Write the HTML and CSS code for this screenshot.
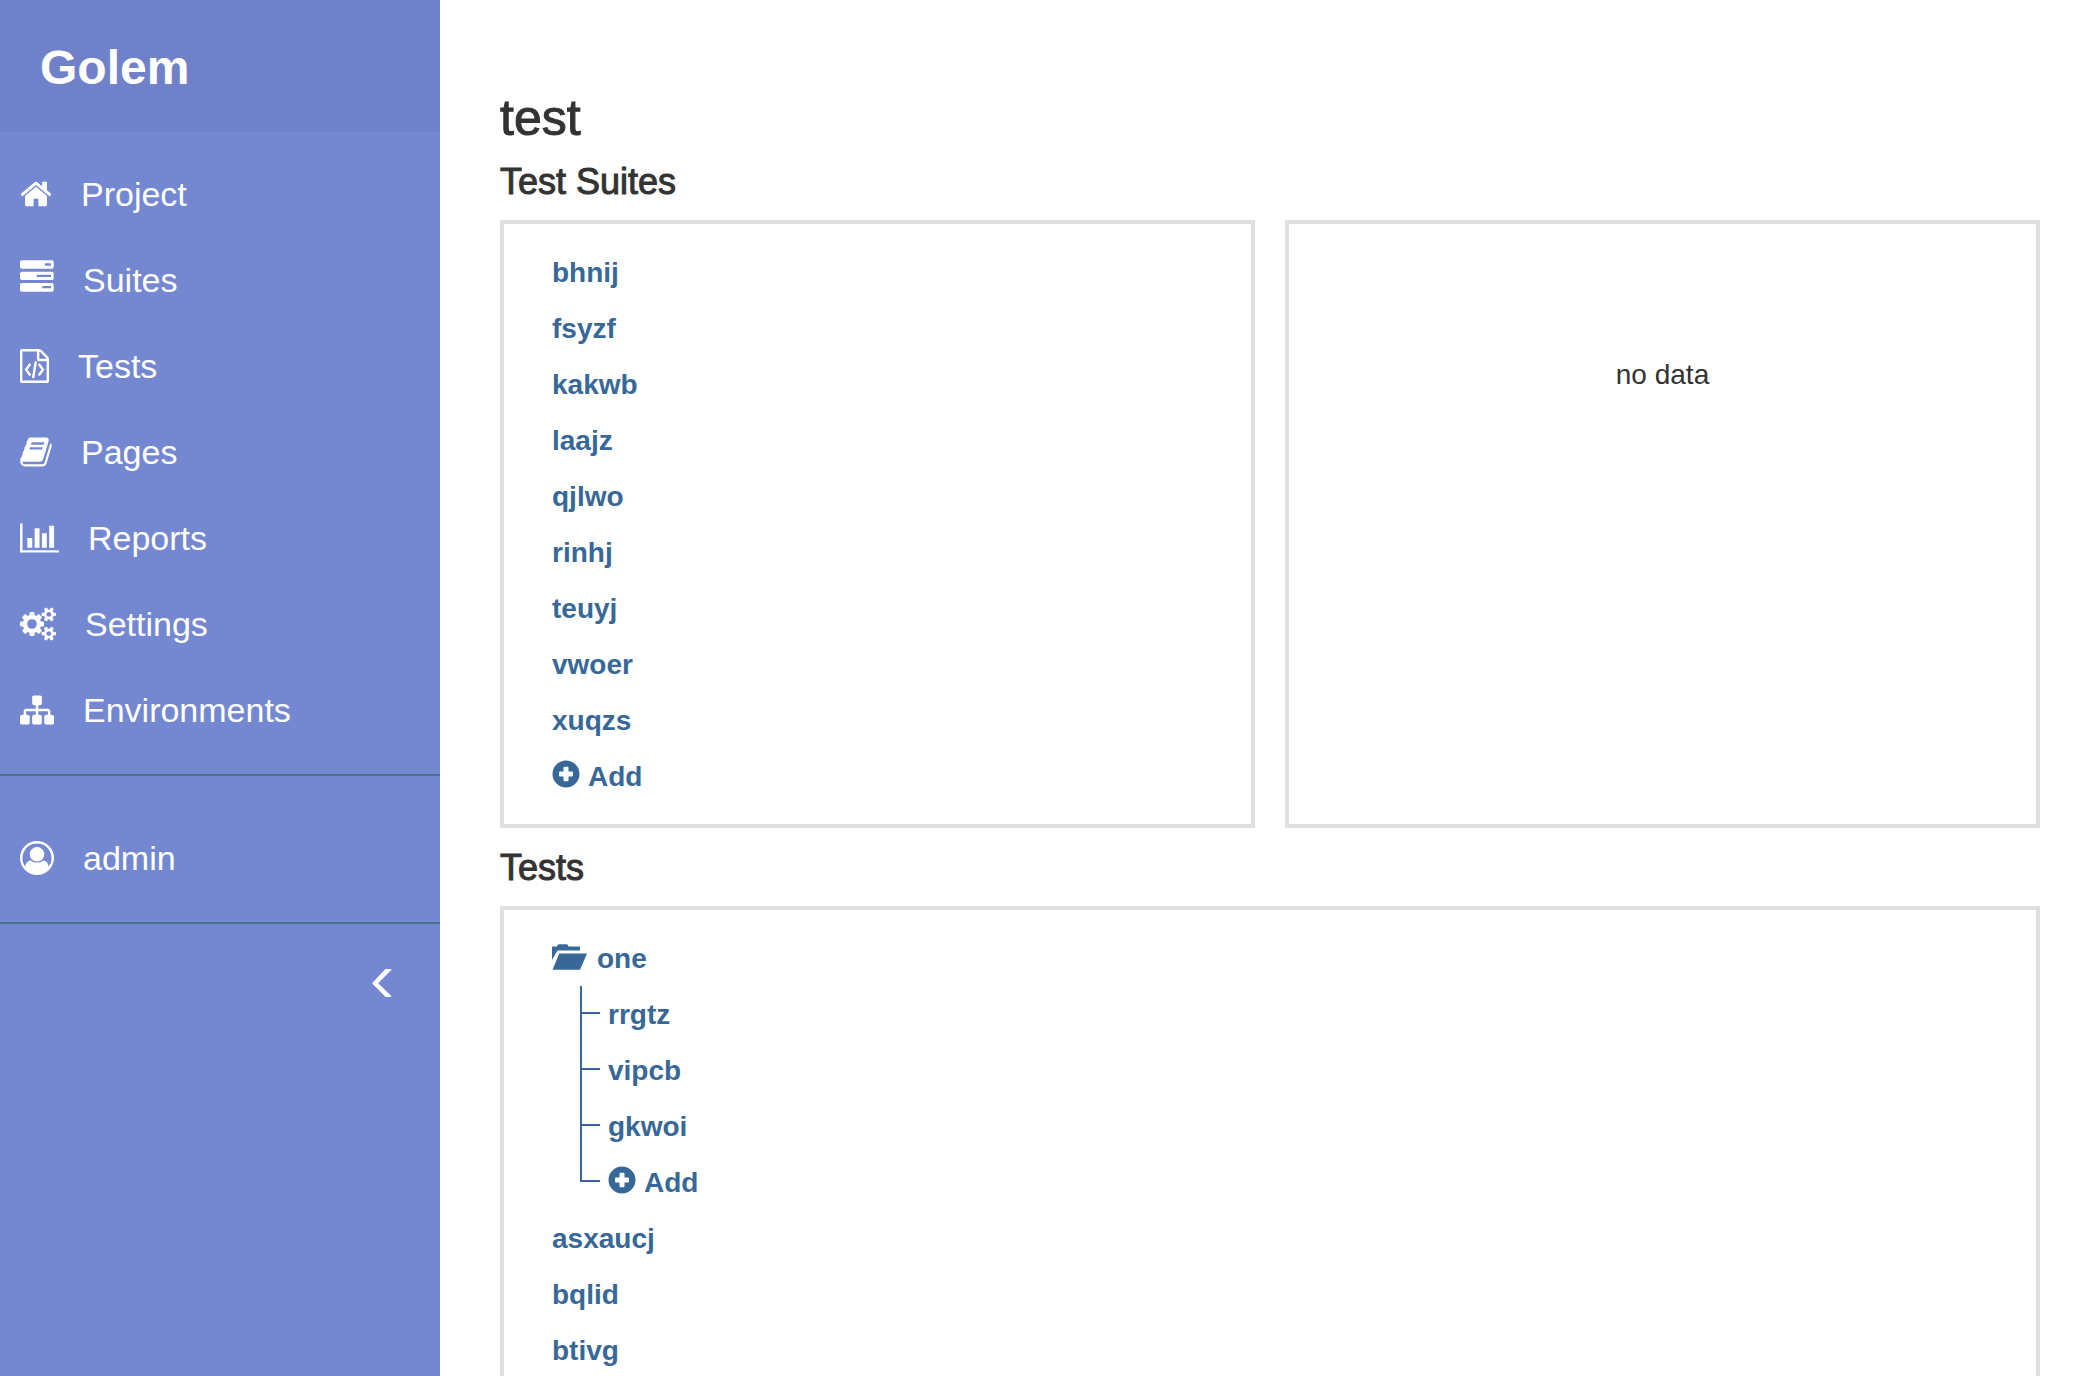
FILE: index.html
```html
<!DOCTYPE html>
<html lang="en">
<head>
<meta charset="utf-8">
<title>Golem - test</title>
<link rel="stylesheet" href="styles.css">
</head>
<body>
<div class="layout">
  <aside class="sidebar">
    <header class="brand"><a href="#">Golem</a></header>
    <nav>
      <ul class="menu">
        <li><a href="#"><svg width="32" height="34" viewBox="64 0 1664 1792"><path d="M1472 992v480q0 26-19 45t-45 19h-384v-384h-256v384h-384q-26 0-45-19t-19-45v-480q0-1 .5-3t.5-3l575-474 575 474q1 2 1 6zm223-69l-62 74q-8 9-21 11h-3q-13 0-21-7l-692-577-692 577q-12 8-24 7-13-2-21-11l-62-74q-8-10-7-23.5t11-21.5l719-599q32-26 76-26t76 26l244 204v-195q0-14 9-23t23-9h192q14 0 23 9t9 23v408l219 182q10 8 11 21.5t-7 23.5z"/></svg>Project</a></li>
        <li><a href="#"><svg width="34" height="34" viewBox="0 0 34 34"><path fill-rule="evenodd" d="M2-2.7h30q1.700 0 1.700 1.700v5q0 1.700-1.700 1.700h-30q-2 0-2-1.700v-5q0-1.700 2-1.700zM25 .3v2.400h6v-2.400zM2 8.700h30q1.700 0 1.700 1.700v4.800q0 1.700-1.700 1.700h-30q-2 0-2-1.700v-4.800q0-1.700 2-1.700zM16.700 11.700v2.300h14.300v-2.300zM2 20h30q1.700 0 1.700 1.700v5.300q0 1.700-1.700 1.700h-30q-2 0-2-1.700v-5.300q0-1.700 2-1.700zM22.300 22.900v2.400h8.700v-2.400z"/></svg>Suites</a></li>
        <li><a href="#"><svg width="29" height="34" viewBox="0 0 1536 1792"><path d="M1468 380q28 28 48 76t20 88v1152q0 40-28 68t-68 28h-1344q-40 0-68-28t-28-68v-1600q0-40 28-68t68-28h896q40 0 88 20t76 48zm-444-244v376h376q-10-29-22-41l-313-313q-12-12-41-22zm384 1528v-1024h-416q-40 0-68-28t-28-68v-416h-768v1536h1280zm-928-896q8-11 21-12.5t24 6.5l51 38q11 8 12.5 21t-6.5 24l-182 243 182 243q8 11 6.5 24t-12.5 21l-51 38q-11 8-24 6.5t-21-12.5l-226-301q-14-19 0-38zm802 301q14 19 0 38l-226 301q-8 11-21 12.5t-24-6.5l-51-38q-11-8-12.5-21t6.5-24l182-243-182-243q-8-11-6.5-24t12.5-21l51-38q11-8 24-6.5t21 12.5zm-620 461q-13-2-20.5-13t-5.5-24l138-831q2-13 13-20.5t24-5.500l63 10q13 2 20.500 13t5.500 24l-138 831q-2 13-13 20.500t-24 5.500z"/></svg>Tests</a></li>
        <li><a href="#"><svg width="32" height="34" viewBox="64 0 1664 1792"><path d="M1703 478q40 57 18 129l-275 906q-19 64-76.5 107.5t-122.5 43.5h-923q-77 0-148.5-53.5t-99.5-131.5q-24-67-2-127 0-4 3-27t4-37q1-8-3-21.5t-3-19.5q2-11 8-21t16.5-23.5 16.5-23.5q23-38 45-91.5t30-91.5q3-10 .5-30t-.5-28q3-11 17-28t17-23q21-36 42-92t25-90q1-9-2.5-32t.5-28q4-13 22-30.5t22-22.5q19-26 42.5-84.5t27.5-96.5q1-8-3-25.5t-2-26.5q2-8 9-18t18-23 17-21q8-12 16.5-30.5t15-35 16-36 19.5-32 26.5-23.5 36-11.5 47.5 5.5l-1 3q38-9 51-9h761q74 0 114 56t18 130l-274 906q-36 119-71.5 153.5t-128.5 34.5h-869q-27 0-38 15-11 16-1 43 24 70 144 70h923q29 0 56-15.5t35-41.5l300-987q7-22 5-57 38 15 59 43zm-1064 2q-4 13 2 22.5t20 9.5h608q13 0 25.5-9.5t16.5-22.5l21-64q4-13-2-22.5t-20-9.5h-608q-13 0-25.5 9.5t-16.5 22.5zm-83 256q-4 13 2 22.5t20 9.5h608q13 0 25.5-9.5t16.5-22.5l21-64q4-13-2-22.5t-20-9.5h-608q-13 0-25.5 9.5t-16.5 22.5z"/></svg>Pages</a></li>
        <li><a href="#"><svg width="39" height="34" viewBox="0 0 2048 1792"><path d="M640 896v512h-256v-512h256zm384-512v1024h-256v-1024h256zm1024 1152v128h-2048v-1536h128v1408h1920zm-640-896v768h-256v-768h256zm384-384v1152h-256v-1152h256z"/></svg>Reports</a></li>
        <li><a href="#"><svg width="36" height="34" viewBox="0 0 1920 1792"><path d="M896 896q0-106-75-181t-181-75-181 75-75 181 75 181 181 75 181-75 75-181zm768 512q0-52-38-90t-90-38-90 38-38 90q0 53 37.5 90.5t90.5 37.5 90.5-37.5 37.5-90.5zm0-1024q0-52-38-90t-90-38-90 38-38 90q0 53 37.5 90.5t90.5 37.5 90.5-37.5 37.5-90.5zm-384 421v185q0 10-7 19.5t-16 10.5l-155 24q-11 35-32 76 34 48 90 115 7 11 7 20 0 12-7 19-23 30-82.5 89.5t-78.5 59.5q-11 0-21-7l-115-90q-37 19-77 31-11 108-23 155-7 24-30 24h-186q-11 0-20-7.5t-10-17.5l-23-153q-34-10-75-31l-118 89q-7 7-20 7-11 0-21-8-144-133-144-160 0-9 7-19 10-14 41-53t47-61q-23-44-35-82l-152-24q-10-1-17-9.5t-7-19.5v-185q0-10 7-19.5t16-10.5l155-24q11-35 32-76-34-48-90-115-7-11-7-20 0-12 7-20 22-30 82-89t79-59q11 0 21 7l115 90q34-18 77-32 11-108 23-154 7-24 30-24h186q11 0 20 7.5t10 17.5l23 153q34 10 75 31l118-89q8-7 20-7 11 0 21 8 144 133 144 160 0 8-7 19-12 16-42 54t-45 60q23 48 34 82l152 23q10 2 17 10.5t7 19.5zm640 533v140q0 16-149 31-12 27-30 52 51 113 51 138 0 4-4 7-122 71-124 71-8 0-46-47t-52-68q-20 2-30 2t-30-2q-14 21-52 68t-46 47q-2 0-124-71-4-3-4-7 0-25 51-138-18-25-30-52-149-15-149-31v-140q0-16 149-31 13-29 30-52-51-113-51-138 0-4 4-7 4-2 35-20t59-34 30-16q8 0 46 46.5t52 67.5q20-2 30-2t30 2q51-71 92-112l6-2q4 0 124 70 4 3 4 7 0 25-51 138 17 23 30 52 149 15 149 31zm0-1024v140q0 16-149 31-12 27-30 52 51 113 51 138 0 4-4 7-122 71-124 71-8 0-46-47t-52-68q-20 2-30 2t-30-2q-14 21-52 68t-46 47q-2 0-124-71-4-3-4-7 0-25 51-138-18-25-30-52-149-15-149-31v-140q0-16 149-31 13-29 30-52-51-113-51-138 0-4 4-7 4-2 35-20t59-34 30-16q8 0 46 46.5t52 67.5q20-2 30-2t30 2q51-71 92-112l6-2q4 0 124 70 4 3 4 7 0 25-51 138 17 23 30 52 149 15 149 31z"/></svg>Settings</a></li>
        <li><a href="#"><svg width="34" height="34" viewBox="0 0 1792 1792"><path d="M1792 1248v320q0 40-28 68t-68 28h-320q-40 0-68-28t-28-68v-320q0-40 28-68t68-28h96v-192h-512v192h96q40 0 68 28t28 68v320q0 40-28 68t-68 28h-320q-40 0-68-28t-28-68v-320q0-40 28-68t68-28h96v-192h-512v192h96q40 0 68 28t28 68v320q0 40-28 68t-68 28h-320q-40 0-68-28t-28-68v-320q0-40 28-68t68-28h96v-192q0-52 38-90t90-38h512v-192h-96q-40 0-68-28t-28-68v-320q0-40 28-68t68-28h320q40 0 68 28t28 68v320q0 40-28 68t-68 28h-96v192h512q52 0 90 38t38 90v192h96q40 0 68 28t28 68z"/></svg>Environments</a></li>
      </ul>
      <ul class="menu menu-user">
        <li><a href="#"><svg width="34" height="34" viewBox="0 0 34 34"><path fill-rule="evenodd" d="M17 0a17 17 0 1 1 0 34a17 17 0 0 1 0-34zM17 2.400A14.600 14.600 0 0 0 5.300 25.600C6 21.500 8 19.200 10.700 19.400Q13.500 21.600 17 21.600T23.300 19.400C26 19.200 28 21.500 28.700 25.600A14.600 14.600 0 0 0 17 2.400z"/><circle cx="17" cy="13.300" r="7.300"/></svg>admin</a></li>
      </ul>
    </nav>
    <button class="collapse" type="button" aria-label="Collapse sidebar"><svg width="20" height="28" viewBox="0 0 20 28"><path d="M13.500 0H19.300V1L6.200 14.300L19.300 27V28H13.500L0 14.300z"/></svg></button>
  </aside>
  <main class="content">
    <h1>test</h1>
    <h2>Test Suites</h2>
    <div class="columns">
      <section class="panel">
        <ul class="tree">
          <li><a href="#">bhnij</a></li>
          <li><a href="#">fsyzf</a></li>
          <li><a href="#">kakwb</a></li>
          <li><a href="#">laajz</a></li>
          <li><a href="#">qjlwo</a></li>
          <li><a href="#">rinhj</a></li>
          <li><a href="#">teuyj</a></li>
          <li><a href="#">vwoer</a></li>
          <li><a href="#">xuqzs</a></li>
          <li><a href="#"><svg width="28" height="32" viewBox="0 0 28 32"><path fill-rule="evenodd" d="M14 .5a13.500 13.500 0 1 1 0 27a13.500 13.500 0 0 1 0-27zM12.500 6.700q-1 0-1 1v3.800h-3.500q-1 0-1 1v3q0 1 1 1h3.500v3.800q0 1 1 1h3q1 0 1-1v-3.800h3.500q1 0 1-1v-3q0-1-1-1h-3.500v-3.800q0-1-1-1z"/></svg>Add</a></li>
        </ul>
      </section>
      <section class="panel">
        <p class="empty">no data</p>
      </section>
    </div>
    <h2>Tests</h2>
    <section class="panel">
      <ul class="tree">
        <li>
          <a href="#"><svg width="37" height="28" viewBox="0 0 37 28"><path d="M0 2.500H5Q5.500 .3 7 .3H14.500Q16 .3 16.500 2.500H28V6.500H5.500L0 16z"/><path d="M7.300 9.500H35L28 25.700H.5z"/></svg>one</a>
          <ul class="branch">
            <li><a href="#">rrgtz</a></li>
            <li><a href="#">vipcb</a></li>
            <li><a href="#">gkwoi</a></li>
            <li><a href="#"><svg width="28" height="32" viewBox="0 0 28 32"><path fill-rule="evenodd" d="M14 .5a13.500 13.500 0 1 1 0 27a13.500 13.500 0 0 1 0-27zM12.500 6.700q-1 0-1 1v3.800h-3.500q-1 0-1 1v3q0 1 1 1h3.500v3.800q0 1 1 1h3q1 0 1-1v-3.800h3.500q1 0 1-1v-3q0-1-1-1h-3.500v-3.800q0-1-1-1z"/></svg>Add</a></li>
          </ul>
        </li>
        <li><a href="#">asxaucj</a></li>
        <li><a href="#">bqlid</a></li>
        <li><a href="#">btivg</a></li>
      </ul>
    </section>
  </main>
</div>
</body>
</html>
```
FILE: styles.css
```css
*,
*::before {
  box-sizing: border-box;
}

body {
  margin: 0;
  background: #fff;
  color: #333;
  font-family: "Liberation Sans", Arial, sans-serif;
  font-size: 28px;
  line-height: 40px;
}

ul {
  margin: 0;
  padding: 0;
  list-style: none;
}

a {
  color: inherit;
  text-decoration: none;
}

svg {
  flex: none;
  fill: currentColor;
  overflow: visible;
}

.layout {
  display: flex;
  height: 100vh;
  overflow: hidden;
}

.sidebar {
  flex: 0 0 440px;
  background: #7488d1;
  color: #fff;
}

.brand {
  padding: 42px 40px 38px;
  background: #6f81c8;
  font-size: 48px;
  font-weight: 700;
  line-height: 52px;
}

.menu {
  padding: 19px 0 21px;
  border-bottom: 2px solid #47748b;
}

.menu-user {
  padding-top: 39px;
}

.menu a {
  display: flex;
  align-items: center;
  gap: 29px;
  height: 86px;
  padding: 0 20px;
  font-size: 34px;
}

.collapse {
  display: block;
  margin: 25px 28px 0 auto;
  padding: 20px;
  border: 0;
  background: none;
  color: inherit;
  line-height: 0;
}

.content {
  flex: 1;
  min-width: 0;
  padding: 92px 60px 60px;
  overflow: hidden;
}

h1,
h2 {
  margin: 0 0 18px;
  font-weight: 400;
  -webkit-text-stroke: 1px currentColor;
}

h1 {
  font-size: 50px;
  line-height: 52px;
}

h2 {
  font-size: 36px;
  line-height: 40px;
}

.columns {
  display: grid;
  grid-template-columns: 1fr 1fr;
  gap: 30px;
  margin-bottom: 20px;
}

.panel {
  padding: 20px 48px;
  border: 4px solid #e0e0e0;
}

.empty {
  margin: 0;
  padding-top: 111px;
  text-align: center;
}

.tree {
  color: #376898;
  font-weight: 700;
}

.tree a {
  display: flex;
  align-items: center;
  gap: 8px;
  height: 56px;
  padding-top: 2px;
}

.tree svg {
  margin-bottom: 2px;
}

.branch {
  margin-left: 28px;
}

.branch li {
  display: flex;
  gap: 8px;
  border-left: 2px solid #376898;
}

.branch li::before {
  content: "";
  width: 18px;
  height: 28px;
  border-bottom: 2px solid #376898;
}

.branch li:last-child {
  border-left: 0;
}

.branch li:last-child::before {
  width: 20px;
  border-left: 2px solid #376898;
}
```
